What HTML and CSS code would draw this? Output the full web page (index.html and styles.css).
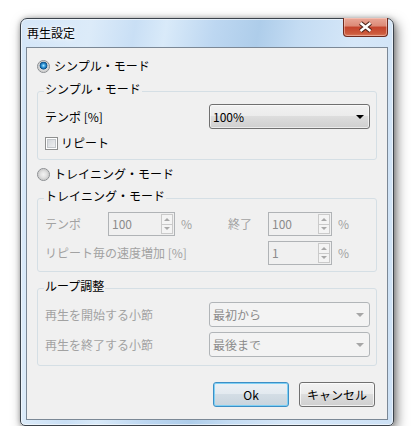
FILE: index.html
```html
<!DOCTYPE html>
<html lang="ja">
<head>
    <meta charset="UTF-8">
    <title>再生設定</title>
    <link rel="stylesheet" href="styles.css">
</head>
<body>
    <div class="window">
        <div class="titlebar">
            <span class="title">再生設定</span>
            <span class="close">
                <svg width="45" height="19" viewBox="0 0 45 19">
                    <path d="M17.5 6l10 8M27.5 6l-10 8" stroke="#4a2218" stroke-width="4.6" fill="none"/>
                    <path d="M17.5 6l10 8M27.5 6l-10 8" stroke="#fff" stroke-width="2.4" fill="none"/>
                </svg>
            </span>
        </div>

        <div class="client">
            <label class="radio-row"><span class="radio on"></span>シンプル・モード</label>

            <fieldset class="group simple">
                <legend>シンプル・モード</legend>
                <div class="combo-row">
                    <span>テンポ [%]</span>
                    <span class="combo"><span>100%</span><span class="caret"></span></span>
                </div>
                <label class="check-row"><span class="check"></span>リピート</label>
            </fieldset>

            <label class="radio-row second"><span class="radio"></span>トレイニング・モード</label>

            <fieldset class="group training">
                <legend>トレイニング・モード</legend>
                <div class="spin-grid">
                    <span class="dis">テンポ</span>
                    <span class="spin wide"><span>100</span><span class="arrows"><span class="up"></span><span class="down"></span></span></span>
                    <span class="dis pct">%</span>
                    <span class="dis">終了</span>
                    <span class="spin"><span>100</span><span class="arrows"><span class="up"></span><span class="down"></span></span></span>
                    <span class="dis pct">%</span>

                    <span class="dis long">リピート毎の速度増加 [%]</span>
                    <span class="spin"><span>1</span><span class="arrows"><span class="up"></span><span class="down"></span></span></span>
                    <span class="dis pct">%</span>
                </div>
            </fieldset>

            <fieldset class="group loop">
                <legend>ループ調整</legend>
                <div class="combo-row">
                    <span class="dis">再生を開始する小節</span>
                    <span class="combo off"><span>最初から</span><span class="caret"></span></span>
                </div>
                <div class="combo-row">
                    <span class="dis">再生を終了する小節</span>
                    <span class="combo off"><span>最後まで</span><span class="caret"></span></span>
                </div>
            </fieldset>

            <div class="buttons">
                <button class="btn default">Ok</button>
                <button class="btn">キャンセル</button>
            </div>
        </div>
    </div>
</body>
</html>
```

FILE: styles.css
```css
body {
    margin: 0;
    background: #fff;
    font-family: "Noto Sans CJK JP", "Liberation Sans", sans-serif;
    font-size: 12px;
    line-height: 16px;
    color: #000;
}

/* window frame */
.window {
    margin: 18px 0 0 20px;
    width: 374px;
    height: 408px;
    box-sizing: border-box;
    padding: 0 5px 5px;
    display: flex;
    flex-direction: column;
    border: 1px solid #3b434c;
    border-radius: 7px 7px 5px 5px;
    background: linear-gradient(100deg, #d4e6f8 0%, #dcebf9 16%, #c9dff5 26%, #d9eaf9 33%, #bdd7f1 44%, #aecdea 54%, #c4dcf3 63%, #d6e7f8 76%, #cde1f5 100%);
    box-shadow: inset 0 0 0 1px rgba(255, 255, 255, .55), 3px 4px 12px rgba(0, 0, 0, .5), 0 0 5px rgba(0, 0, 0, .25);
}
.titlebar {
    height: 28px;
    display: flex;
    align-items: center;
}
.title {
    margin-left: 1px;
    text-shadow: 0 0 6px #fff, 0 0 3px #fff;
}
.close {
    align-self: flex-start;
    margin: -1px 0 0 auto;
    width: 45px;
    height: 19px;
    box-sizing: border-box;
    border: 1px solid #6e2a1e;
    border-top: none;
    border-radius: 0 0 4px 4px;
    background: linear-gradient(#e9a797, #dc8a76 45%, #c4432c 50%, #cc5a3c 85%, #d9785a);
    box-shadow: inset 0 0 0 1px rgba(255, 220, 210, .45);
}
.close svg {
    display: block;
    margin: -1px 0 0 -1px;
}

/* client area */
.client {
    flex: 1;
    display: flex;
    flex-direction: column;
    background: #f0f0f0;
    border: 1px solid #7b8896;
}
.radio-row {
    height: 20px;
    margin: 8px 0 0 10px;
    display: flex;
    align-items: center;
    gap: 4px;
}
.radio-row.second {
    margin-top: 4px;
}
.radio {
    width: 13px;
    height: 13px;
    box-sizing: border-box;
    border: 1px solid #8a8d90;
    border-radius: 50%;
    background: radial-gradient(circle at 50% 50%, #f2f2f2 0, #e2e2e2 3px, #cfcfcf 5px, #f6f6f6 6px);
}
.radio.on {
    background: radial-gradient(circle at 50% 42%, #b8ecff 0, #45a8e6 1.5px, #1469a8 3px, #0c4c80 3.6px, transparent 4.2px),
        radial-gradient(circle at 50% 50%, #f2f2f2 0, #e2e2e2 3px, #cfcfcf 5px, #f6f6f6 6px);
}

/* group boxes */
.group {
    margin: 5px 10px 0;
    padding: 3px 6px 6px 7px;
    border: 1px solid #d5dfe5;
    border-radius: 3px;
    min-inline-size: 0;
}
.group legend {
    padding: 0 1px 4px;
    margin-left: -1px;
    line-height: 16px;
}
.group.training {
    margin-top: 4px;
    padding-top: 4px;
}
.group.loop {
    margin-top: 6px;
    padding-top: 4px;
    padding-bottom: 8px;
}
.dis {
    color: #a2a2a2;
}

/* combo boxes */
.combo-row {
    height: 25px;
    display: flex;
    align-items: center;
    justify-content: space-between;
}
.combo-row + .combo-row {
    margin-top: 5px;
}
.combo {
    width: 161px;
    height: 25px;
    box-sizing: border-box;
    padding: 0 5px 0 3px;
    display: flex;
    align-items: center;
    justify-content: space-between;
    border: 1px solid #707070;
    border-radius: 3px;
    background: linear-gradient(#f2f2f2, #ebebeb 50%, #dddddd 50%, #cfcfcf);
    box-shadow: inset 0 0 0 1px rgba(255, 255, 255, .6);
}
.caret {
    width: 0;
    height: 0;
    border-left: 4px solid transparent;
    border-right: 4px solid transparent;
    border-top: 4px solid #000;
}
.combo.off {
    border-color: #b1b5b8;
    background: #f3f3f3;
    box-shadow: none;
    color: #8b8b8b;
}
.combo.off .caret {
    border-top-color: #a6a6a6;
}

/* check box */
.check-row {
    height: 20px;
    margin-top: 4px;
    display: flex;
    align-items: center;
    gap: 3px;
}
.check {
    width: 13px;
    height: 13px;
    box-sizing: border-box;
    border: 1px solid #8e8f8f;
    background: linear-gradient(135deg, #cdd1d6, #f6f6f6);
    box-shadow: inset 0 0 0 1px #fff, inset 0 0 0 2px #c3c7cb;
}

/* spin boxes */
.spin-grid {
    display: grid;
    grid-template-columns: 63px 67px 53px 40px 64px auto;
    grid-auto-rows: 24px;
    row-gap: 5px;
    align-items: center;
}
.spin-grid .long {
    grid-column: 1 / 5;
}
.pct {
    padding-left: 6px;
}
.spin {
    height: 24px;
    box-sizing: border-box;
    padding: 1px 1px 1px 3px;
    display: flex;
    align-items: center;
    justify-content: space-between;
    border: 1px solid #b0b3b6;
    color: #8c8c8c;
}
.spin-grid .spin:nth-child(5),
.spin-grid .spin:nth-child(8) {
    grid-column: 5;
}
.arrows {
    width: 12px;
    align-self: stretch;
    display: flex;
    flex-direction: column;
}
.arrows span {
    flex: 1;
    display: flex;
    align-items: center;
    justify-content: center;
    border: 1px solid #cacaca;
    background: #f4f4f4;
}
.arrows span + span {
    border-top: none;
}
.arrows span::after {
    content: "";
    border-left: 3px solid transparent;
    border-right: 3px solid transparent;
}
.arrows .up::after {
    border-bottom: 3px solid #a8a8a8;
}
.arrows .down::after {
    border-top: 3px solid #a8a8a8;
}

/* dialog buttons */
.buttons {
    margin: 16px 12px 0 0;
    display: flex;
    justify-content: flex-end;
    gap: 10px;
}
.btn {
    width: 76px;
    height: 25px;
    padding: 0;
    font: inherit;
    color: #000;
    border: 1px solid #707070;
    border-radius: 3px;
    background: linear-gradient(#f2f2f2, #ebebeb 50%, #dddddd 50%, #cfcfcf);
    box-shadow: inset 0 0 0 1px rgba(255, 255, 255, .7);
}
.btn.default {
    border-color: #3c8fc6;
    background: linear-gradient(#ecf1f5, #e2e9ef 50%, #d3dde5 50%, #c8d4dd);
    box-shadow: inset 0 0 0 1px #7fd0f4;
}
```
